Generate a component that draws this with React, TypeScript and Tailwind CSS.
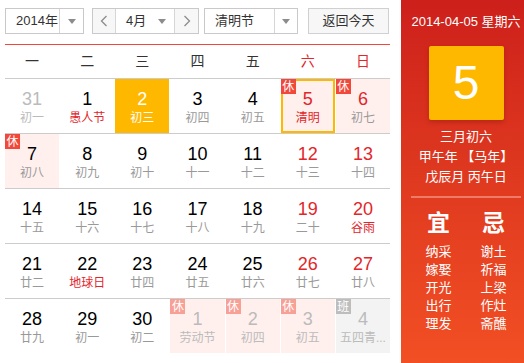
type Day = {
  n: string;
  lunar: string;
  other?: boolean;
  red?: boolean;
  lunarRed?: boolean;
  rest?: "rest" | "work";
  today?: boolean;
  selected?: boolean;
};

const weeks: Day[][] = [
  [
    { n: "31", lunar: "初一", other: true },
    { n: "1", lunar: "愚人节", lunarRed: true },
    { n: "2", lunar: "初三", today: true },
    { n: "3", lunar: "初四" },
    { n: "4", lunar: "初五" },
    { n: "5", lunar: "清明", red: true, lunarRed: true, rest: "rest", selected: true },
    { n: "6", lunar: "初七", red: true, rest: "rest" },
  ],
  [
    { n: "7", lunar: "初八", rest: "rest" },
    { n: "8", lunar: "初九" },
    { n: "9", lunar: "初十" },
    { n: "10", lunar: "十一" },
    { n: "11", lunar: "十二" },
    { n: "12", lunar: "十三", red: true },
    { n: "13", lunar: "十四", red: true },
  ],
  [
    { n: "14", lunar: "十五" },
    { n: "15", lunar: "十六" },
    { n: "16", lunar: "十七" },
    { n: "17", lunar: "十八" },
    { n: "18", lunar: "十九" },
    { n: "19", lunar: "二十", red: true },
    { n: "20", lunar: "谷雨", red: true, lunarRed: true },
  ],
  [
    { n: "21", lunar: "廿二" },
    { n: "22", lunar: "地球日", lunarRed: true },
    { n: "23", lunar: "廿四" },
    { n: "24", lunar: "廿五" },
    { n: "25", lunar: "廿六" },
    { n: "26", lunar: "廿七", red: true },
    { n: "27", lunar: "廿八", red: true },
  ],
  [
    { n: "28", lunar: "廿九" },
    { n: "29", lunar: "初一" },
    { n: "30", lunar: "初二" },
    { n: "1", lunar: "劳动节", other: true, rest: "rest" },
    { n: "2", lunar: "初四", other: true, rest: "rest" },
    { n: "3", lunar: "初五", other: true, rest: "rest" },
    { n: "4", lunar: "五四青...", other: true, rest: "work" },
  ],
];

const weekdays = ["一", "二", "三", "四", "五", "六", "日"];

const yi = ["纳采", "嫁娶", "开光", "出行", "理发"];
const ji = ["谢土", "祈福", "上梁", "作灶", "斋醮"];

const Arrow = () => (
  <span className="w-0 h-0 border-l-[4px] border-r-[4px] border-t-[5px] border-l-transparent border-r-transparent border-t-[#8c8c8c]" />
);

const Chevron = ({ dir }: { dir: "left" | "right" }) => (
  <svg width="8" height="12" viewBox="0 0 8 12">
    <polyline
      points={dir === "left" ? "6.5,1 1.5,6 6.5,11" : "1.5,1 6.5,6 1.5,11"}
      fill="none"
      stroke="#8c8c8c"
      strokeWidth="1.3"
    />
  </svg>
);

const Cell = ({ d }: { d: Day }) => {
  let bg = "";
  if (d.today) bg = "bg-[#ffb800]";
  else if (d.rest === "rest") bg = "bg-[#fff0ee]";
  else if (d.rest === "work") bg = "bg-[#f3f3f3]";

  const numColor = d.today
    ? "text-white"
    : d.other
      ? "text-[#bbbbbb]"
      : d.red
        ? "text-[#e2262a]"
        : "text-black";
  const lunarColor = d.today
    ? "text-white"
    : d.other
      ? "text-[#bbbbbb]"
      : d.lunarRed
        ? "text-[#e2262a]"
        : "text-[#999999]";
  const badgeBg =
    d.rest === "work" ? "bg-[#bdbdbd]" : d.other ? "bg-[#f8a096]" : "bg-[#f2483b]";

  return (
    <div className={`relative h-[54px] flex flex-col items-center pt-[10px] ${bg}`}>
      {d.selected && <div className="absolute inset-0 border-2 border-[#ffb800]" />}
      {d.rest && (
        <span
          className={`absolute left-0 top-0 z-10 w-[15px] h-[15px] flex items-center justify-center text-[12px] leading-none text-white ${badgeBg}`}
        >
          {d.rest === "rest" ? "休" : "班"}
        </span>
      )}
      <span className={`text-[18px] leading-[20px] ${numColor}`}>{d.n}</span>
      <span className={`text-[12px] leading-[16px] mt-[1px] whitespace-nowrap ${lunarColor}`}>{d.lunar}</span>
    </div>
  );
};

export default function App() {
  return (
    <div
      className="w-[524px] h-[363px] flex bg-white overflow-hidden"
      style={{ fontFamily: '"Liberation Sans", "Noto Sans CJK SC", sans-serif' }}
    >
      <section className="w-[401px] pl-[5px]">
        <div className="mt-[8px] h-[26px] flex items-stretch text-[13px] text-[#333] whitespace-nowrap">
          <div className="w-[79px] flex border border-[#c9c9c9] bg-white">
            <span className="flex-1 pl-[10px] flex items-center">2014年</span>
            <span className="w-[24px] border-l border-[#d6d6d6] flex items-center justify-center">
              <Arrow />
            </span>
          </div>
          <div className="ml-[8px] w-[107px] flex border border-[#c9c9c9]">
            <span className="w-[22px] bg-[#f7f7f7] flex items-center justify-center">
              <Chevron dir="left" />
            </span>
            <span className="w-[60px] border-l border-r border-[#d6d6d6] bg-white flex items-center justify-between pl-[10px] pr-[8px]">
              4月
              <Arrow />
            </span>
            <span className="flex-1 bg-[#f7f7f7] flex items-center justify-center">
              <Chevron dir="right" />
            </span>
          </div>
          <div className="ml-[5px] w-[94px] flex border border-[#c9c9c9] bg-white">
            <span className="flex-1 pl-[10px] flex items-center">清明节</span>
            <span className="w-[23px] border-l border-[#d6d6d6] flex items-center justify-center">
              <Arrow />
            </span>
          </div>
          <button className="ml-[10px] w-[81px] border border-[#d0d0d0] bg-[#f7f7f7] flex items-center justify-center text-[#333]">
            返回今天
          </button>
        </div>

        <div className="w-[385px] mt-[10px]">
          <div className="grid grid-cols-7 gap-x-px h-[35px] border-t border-b border-t-[#f0483e] border-b-[#cccccc] text-[14px]">
            {weekdays.map((w, i) => (
              <div
                key={w}
                className={`flex items-center justify-center ${i >= 5 ? "text-[#e2262a]" : "text-[#333]"}`}
              >
                {w}
              </div>
            ))}
          </div>
          {weeks.map((week, wi) => (
            <div
              key={wi}
              className={`grid grid-cols-7 gap-x-px ${wi < weeks.length - 1 ? "border-b border-[#cccccc]" : ""}`}
            >
              {week.map((d, di) => (
                <Cell key={di} d={d} />
              ))}
            </div>
          ))}
        </div>
      </section>

      <aside className="w-[123px] h-full bg-gradient-to-b from-[#cd1f1b] to-[#f24f24] text-white pl-[10px] pr-[3px] flex flex-col items-center">
        <div className="mt-[12px] text-[13px] leading-[20px] whitespace-nowrap">2014-04-05 星期六</div>
        <div className="mt-[14px] w-[75px] h-[74px] bg-[#ffb800] rounded-[2px] shadow-[0_2px_4px_rgba(120,20,0,0.35)] flex items-center justify-center text-[48px] leading-none">
          5
        </div>
        <div className="mt-[7px] text-[13px] leading-[20px] text-center whitespace-nowrap">
          <div>三月初六</div>
          <div>甲午年 【马年】</div>
          <div>戊辰月 丙午日</div>
        </div>
        <div className="mt-[9px] w-[110px] h-[2px] bg-[#ef7a68]" />
        <div className="w-[110px] grid grid-cols-2 mt-[12px]">
          <div className="flex flex-col items-center">
            <span className="text-[23px] leading-[26px] font-bold">宜</span>
            <div className="mt-[7px] text-[13px] leading-[18px] text-center">
              {yi.map((t) => (
                <div key={t}>{t}</div>
              ))}
            </div>
          </div>
          <div className="flex flex-col items-center">
            <span className="text-[23px] leading-[26px] font-bold">忌</span>
            <div className="mt-[7px] text-[13px] leading-[18px] text-center">
              {ji.map((t) => (
                <div key={t}>{t}</div>
              ))}
            </div>
          </div>
        </div>
      </aside>
    </div>
  );
}
